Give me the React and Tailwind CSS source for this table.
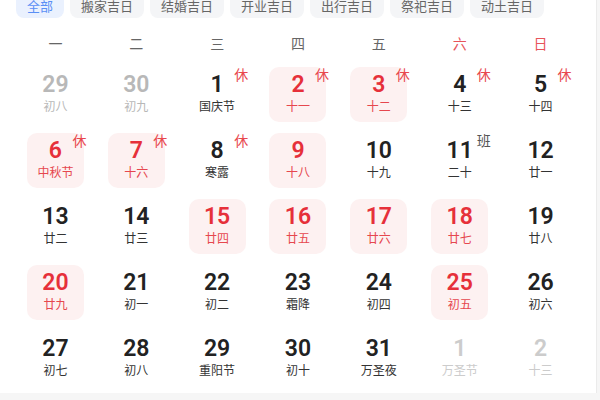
const tabs = ["全部", "搬家吉日", "结婚吉日", "开业吉日", "出行吉日", "祭祀吉日", "动土吉日"]
const weekdays = ["一", "二", "三", "四", "五", "六", "日"]

const days = [
  { d: 29, l: "初八", t: "other" },
  { d: 30, l: "初九", t: "other" },
  { d: 1, l: "国庆节", tag: "休" },
  { d: 2, l: "十一", t: "hi", tag: "休" },
  { d: 3, l: "十二", t: "hi", tag: "休" },
  { d: 4, l: "十三", tag: "休" },
  { d: 5, l: "十四", tag: "休" },
  { d: 6, l: "中秋节", t: "hi", tag: "休" },
  { d: 7, l: "十六", t: "hi", tag: "休" },
  { d: 8, l: "寒露", tag: "休" },
  { d: 9, l: "十八", t: "hi" },
  { d: 10, l: "十九" },
  { d: 11, l: "二十", tag: "班" },
  { d: 12, l: "廿一" },
  { d: 13, l: "廿二" },
  { d: 14, l: "廿三" },
  { d: 15, l: "廿四", t: "hi" },
  { d: 16, l: "廿五", t: "hi" },
  { d: 17, l: "廿六", t: "hi" },
  { d: 18, l: "廿七", t: "hi" },
  { d: 19, l: "廿八" },
  { d: 20, l: "廿九", t: "hi" },
  { d: 21, l: "初一" },
  { d: 22, l: "初二" },
  { d: 23, l: "霜降" },
  { d: 24, l: "初四" },
  { d: 25, l: "初五", t: "hi" },
  { d: 26, l: "初六" },
  { d: 27, l: "初七" },
  { d: 28, l: "初八" },
  { d: 29, l: "重阳节" },
  { d: 30, l: "初十" },
  { d: 31, l: "万圣夜" },
  { d: 1, l: "万圣节", t: "next" },
  { d: 2, l: "十三", t: "next" },
]

function Cell({ day }) {
  let box = "bg-transparent"
  let num = "text-[#222222]"
  let lunar = "text-[#333333]"
  if (day.t === "hi") {
    box = "bg-[#fdf1f1]"
    num = "text-[#e6303a]"
    lunar = "text-[#e6474e]"
  } else if (day.t === "other") {
    num = "text-[#b8b8b8]"
    lunar = "text-[#b8b8b8]"
  } else if (day.t === "next") {
    num = "text-[#cccccc]"
    lunar = "text-[#cccccc]"
  }

  return (
    <div className="relative h-[66px] flex items-center justify-center">
      <div className={"w-[57px] h-[55px] rounded-[10px] flex flex-col items-center justify-center gap-[4px] " + box}>
        <span className={"font-['Roboto'] font-semibold text-[23px] leading-[20px] " + num}>{day.d}</span>
        <span className={"text-[12px] leading-[14px] " + lunar}>{day.l}</span>
      </div>
      {day.tag && (
        <span
          className={
            "absolute left-[calc(50%+17px)] top-[5px] text-[14px] leading-[16px] " +
            (day.tag === "休" ? "text-[#e8484e]" : "text-[#555555]")
          }
        >
          {day.tag}
        </span>
      )}
    </div>
  )
}

export default function App() {
  return (
    <div className="w-[600px] h-[400px] overflow-hidden bg-[#f6f6f6] font-['Noto_Sans_CJK_SC',sans-serif]">
      <div className="w-[597px] h-[400px] bg-white border-r border-[#ebebeb] px-[15px]">
        <div className="flex gap-[6px] mt-[-7px] h-[25px] pl-px">
          {tabs.map((t, i) => (
            <div
              key={t}
              className={
                "h-[25px] px-[11px] rounded-[8px] flex items-center text-[13px] " +
                (i === 0 ? "bg-[#eaf1fe] text-[#5a8ff5]" : "bg-[#f4f5f7] text-[#666666]")
              }
            >
              {t}
            </div>
          ))}
        </div>

        <div className="grid grid-cols-7 h-[30px] mt-[10px]">
          {weekdays.map((w, i) => (
            <div
              key={w}
              className={
                "flex items-center justify-center text-[14px] " +
                (i >= 5 ? "text-[#e8545a]" : "text-[#666666]")
              }
            >
              {w}
            </div>
          ))}
        </div>

        <div className="grid grid-cols-7 mt-[3px]">
          {days.map((day, i) => (
            <Cell key={i} day={day} />
          ))}
        </div>
      </div>
    </div>
  )
}
